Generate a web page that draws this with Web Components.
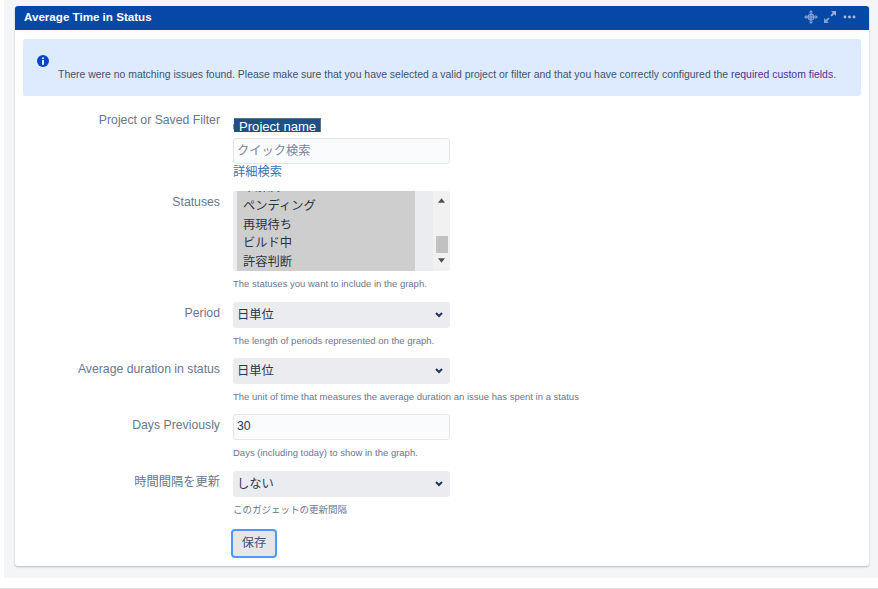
<!DOCTYPE html>
<html>
<head>
<meta charset="utf-8">
<title>Average Time in Status</title>
<style>
  html, body { margin: 0; padding: 0; background: #fff; }
  body { width: 878px; height: 589px; overflow: hidden; font-family: "Liberation Sans", "Noto Sans CJK JP", sans-serif; }
</style>
</head>
<body>
<dash-board>
  <gadget-card title="Average Time in Status">
    <info-message>There were no matching issues found. Please make sure that you have selected a valid project or filter and that you have correctly configured the <a style="color:#503090">required custom fields</a>.</info-message>

    <form-row label="Project or Saved Filter" class="first">
      <project-picker></project-picker>
    </form-row>

    <form-row label="Statuses" hint="The statuses you want to include in the graph." class="statuses">
      <status-list></status-list>
    </form-row>

    <form-row label="Period" hint="The length of periods represented on the graph.">
      <select-box value="日単位"></select-box>
    </form-row>

    <form-row label="Average duration in status" hint="The unit of time that measures the average duration an issue has spent in a status">
      <select-box value="日単位"></select-box>
    </form-row>

    <form-row label="Days Previously" hint="Days (including today) to show in the graph.">
      <text-box value="30"></text-box>
    </form-row>

    <form-row label="時間間隔を更新" hint="このガジェットの更新間隔">
      <select-box value="しない"></select-box>
    </form-row>

    <form-row class="actions">
      <save-button>保存</save-button>
    </form-row>
  </gadget-card>
</dash-board>

<script>
/* page background: grey dashboard area and the thin rule under it */
class DashBoard extends HTMLElement {
  constructor() {
    super();
    this.attachShadow({ mode: "open" });
    this.shadowRoot.innerHTML = `
      <style>
        :host { display: block; height: 589px; }
        .area {
          margin-left: 4px;
          height: 578px;
          box-sizing: border-box;
          padding: 6px 9px 0 11px;
          background: #f4f5f7;
        }
        .rule { margin-top: 10px; height: 1px; background: #e4e5e8; }
      </style>
      <div class="area"><slot></slot></div>
      <div class="rule"></div>
    `;
  }
}

class GadgetCard extends HTMLElement {
  constructor() {
    super();
    this.attachShadow({ mode: "open" });
    this.shadowRoot.innerHTML = `
      <style>
        :host {
          display: block;
          height: 560px;
          background: #fff;
          border-radius: 3px;
          box-shadow: 0 1px 2px rgba(9, 30, 66, 0.28);
        }
        header {
          height: 24px;
          box-sizing: border-box;
          display: flex;
          align-items: center;
          justify-content: space-between;
          padding: 0 13px 2px 9px;
          background: #0747a6;
          border-radius: 3px 3px 0 0;
          color: #fff;
          font: bold 11.6px "Liberation Sans", sans-serif;
        }
        .title { margin-top: -2px; }
        .icons { display: flex; align-items: center; gap: 6px; }
        .icons svg:first-child { margin-right: -1px; }
        svg { display: block; }
        .body { padding: 9px 8px 0; }
      </style>
      <header>
        <span class="title"></span>
        <span class="icons">
          <svg width="14" height="14" viewBox="0 0 14 14" fill="#7f9fd3">
            <path d="M7 0 9.2 2.6H4.8zM7 14 4.8 11.4H9.2zM0 7 2.6 4.8V9.2zM14 7 11.4 9.2V4.8z"/>
            <path d="M6.3 2.4h1.4v9.2H6.3zM2.4 6.3h9.2v1.4H2.4z"/>
            <circle cx="7" cy="7" r="2.8" fill="none" stroke="#7f9fd3" stroke-width="1.4"/>
          </svg>
          <svg width="14" height="14" viewBox="0 0 14 14" fill="#7f9fd3">
            <path d="M8 1h5v5l-1.8-1.8-2.4 2.4-1.4-1.4 2.4-2.4z" fill="#94b0dc"/>
            <path d="M6 13H1V8l1.8 1.8 2.4-2.4 1.4 1.4-2.4 2.4z"/>
          </svg>
          <svg width="13" height="14" viewBox="0 0 13 14" fill="#a9bfe2">
            <circle cx="2" cy="7" r="1.4"/><circle cx="6.5" cy="7" r="1.4"/><circle cx="11" cy="7" r="1.4"/>
          </svg>
        </span>
      </header>
      <div class="body"><slot></slot></div>
    `;
    this.shadowRoot.querySelector(".title").textContent = this.getAttribute("title");
  }
}

class InfoMessage extends HTMLElement {
  constructor() {
    super();
    this.attachShadow({ mode: "open" });
    this.shadowRoot.innerHTML = `
      <style>
        :host {
          display: block;
          height: 57px;
          box-sizing: border-box;
          padding: 16px 14px 0;
          background: #deebff;
          border-radius: 3px;
          color: #42526e;
          font: 10.44px "Liberation Sans", sans-serif;
        }
        svg { display: block; }
        p { margin: 1px 0 0 21px; line-height: 14px; white-space: nowrap; }
      </style>
      <svg width="12" height="12" viewBox="0 0 12 12">
        <circle cx="6" cy="6" r="6" fill="#0747c6"/>
        <rect x="5" y="2.2" width="2" height="2" rx="1" fill="#deebff"/>
        <rect x="5" y="5" width="2" height="4.8" fill="#deebff"/>
      </svg>
      <p><slot></slot></p>
    `;
  }
}

/* label column + field column + optional hint under the field */
class FormRow extends HTMLElement {
  constructor() {
    super();
    this.attachShadow({ mode: "open" });
    this.shadowRoot.innerHTML = `
      <style>
        :host {
          display: grid;
          grid-template-columns: 197px 217px;
          column-gap: 13px;
          margin-top: 10.33px;
          color: #6b778c;
          font: 12.25px "Liberation Sans", "Noto Sans CJK JP", sans-serif;
        }
        :host(.first) { margin-top: 16px; }
        :host(.statuses) { margin-top: 12.33px; }
        :host(.actions) { margin-top: 12px; }
        label { text-align: right; line-height: 16px; padding-top: 3px; white-space: nowrap; }
        :host(.first) label { padding-top: 0; }
        .hint {
          margin-top: 6px;
          min-height: 14px;
          line-height: 14px;
          font-size: 9.5px;
          white-space: nowrap;
        }
        .hint:empty { display: none; }
      </style>
      <label></label>
      <div>
        <slot></slot>
        <div class="hint"></div>
      </div>
    `;
    this.shadowRoot.querySelector("label").textContent = this.getAttribute("label") || "";
    this.shadowRoot.querySelector(".hint").textContent = this.getAttribute("hint") || "";
  }
}

class ProjectPicker extends HTMLElement {
  constructor() {
    super();
    this.attachShadow({ mode: "open" });
    this.shadowRoot.innerHTML = `
      <style>
        :host { display: block; }
        .line { display: flex; align-items: flex-end; height: 14px; margin-top: 6px; }
        .mark { width: 1px; height: 5px; margin-bottom: 3px; background: #a8945a; }
        .chip {
          display: block;
          width: 87px;
          height: 14px;
          box-sizing: border-box;
          overflow: hidden;
          background: #205081;
          border: solid #5f7288;
          border-width: 1px 1px 0 0;
          color: #fff;
          font: 13.1px/16px "Liberation Sans", sans-serif;
          text-indent: 5px;
          white-space: nowrap;
        }
        .search {
          height: 26px;
          margin-top: 6px;
          box-sizing: border-box;
          padding-left: 3px;
          background: #fafbfc;
          border: 1px solid #e4e6ea;
          border-radius: 3px;
          color: #7a869a;
          font: 12.25px/24px "Liberation Sans", "Noto Sans CJK JP", sans-serif;
        }
        a {
          display: block;
          height: 15px;
          color: #3b6fb5;
          font: 12.25px/17px "Liberation Sans", "Noto Sans CJK JP", sans-serif;
        }
      </style>
      <div class="line"><span class="mark"></span><span class="chip">Project name</span></div>
      <div class="search">クイック検索</div>
      <a>詳細検索</a>
    `;
  }
}

class StatusList extends HTMLElement {
  constructor() {
    super();
    this.attachShadow({ mode: "open" });
    this.shadowRoot.innerHTML = `
      <style>
        :host {
          display: flex;
          height: 80px;
          background: #ebecf0;
          border-radius: 3px;
          overflow: hidden;
          color: #2d3440;
          font: 12.25px "Liberation Sans", "Noto Sans CJK JP", sans-serif;
        }
        .options {
          width: 178px;
          margin-left: 4px;
          padding-left: 6px;
          box-sizing: border-box;
          background: #cecece;
          display: flex;
          flex-direction: column;
          justify-content: flex-end;
          overflow: hidden;
        }
        .options div { flex: none; height: 18.6px; line-height: 18px; }
        .bar {
          width: 17px;
          margin-left: auto;
          background: #f1f1f1;
          display: flex;
          flex-direction: column;
          align-items: center;
          padding-top: 7px;
          box-sizing: border-box;
        }
        .thumb { width: 12px; height: 17px; background: #c1c1c1; margin: 33px 0 5px; }
        svg { display: block; }
      </style>
      <div class="options">
        <div>未解決</div>
        <div>ペンディング</div>
        <div>再現待ち</div>
        <div>ビルド中</div>
        <div>許容判断</div>
      </div>
      <div class="bar">
        <svg width="7" height="5" viewBox="0 0 8 5"><path d="M4 0 8 5H0z" fill="#505050"/></svg>
        <div class="thumb"></div>
        <svg width="7" height="5" viewBox="0 0 8 5"><path d="M0 0h8L4 5z" fill="#505050"/></svg>
      </div>
    `;
  }
}

class SelectBox extends HTMLElement {
  constructor() {
    super();
    this.attachShadow({ mode: "open" });
    this.shadowRoot.innerHTML = `
      <style>
        :host {
          display: flex;
          align-items: center;
          justify-content: space-between;
          height: 26px;
          box-sizing: border-box;
          padding: 0 7px 0 4px;
          background: #ebecf0;
          border-radius: 3px;
          color: #253858;
          font: 12.25px "Liberation Sans", "Noto Sans CJK JP", sans-serif;
        }
        span { margin-top: -2px; }
        svg { display: block; }
      </style>
      <span></span>
      <svg width="8" height="6" viewBox="0 0 8 6"><path d="M1 1 4 4 7 1" fill="none" stroke="#253858" stroke-width="2"/></svg>
    `;
    this.shadowRoot.querySelector("span").textContent = this.getAttribute("value");
  }
}

class TextBox extends HTMLElement {
  constructor() {
    super();
    this.attachShadow({ mode: "open" });
    this.shadowRoot.innerHTML = `
      <style>
        :host {
          display: block;
          height: 26px;
          box-sizing: border-box;
          padding-left: 3px;
          background: #fafbfc;
          border: 1px solid #e4e6ea;
          border-radius: 3px;
          color: #253858;
          font: 12.25px/23px "Liberation Sans", sans-serif;
        }
      </style>
      <span></span>
    `;
    this.shadowRoot.querySelector("span").textContent = this.getAttribute("value");
  }
}

class SaveButton extends HTMLElement {
  constructor() {
    super();
    this.attachShadow({ mode: "open" });
    this.shadowRoot.innerHTML = `
      <style>
        :host {
          display: flex;
          align-items: center;
          justify-content: center;
          width: 46px;
          height: 29px;
          margin-left: -2px;
          padding-bottom: 2px;
          box-sizing: border-box;
          background: #e5e6ea;
          border: 2px solid #4c9aff;
          border-radius: 4px;
          color: #42526e;
          font: 12.25px "Liberation Sans", "Noto Sans CJK JP", sans-serif;
        }
      </style>
      <slot></slot>
    `;
  }
}

customElements.define("dash-board", DashBoard);
customElements.define("gadget-card", GadgetCard);
customElements.define("info-message", InfoMessage);
customElements.define("form-row", FormRow);
customElements.define("project-picker", ProjectPicker);
customElements.define("status-list", StatusList);
customElements.define("select-box", SelectBox);
customElements.define("text-box", TextBox);
customElements.define("save-button", SaveButton);
</script>
</body>
</html>
